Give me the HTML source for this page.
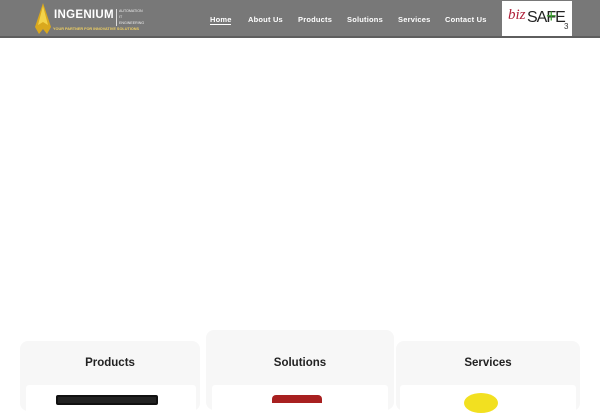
<!DOCTYPE html>
<html><head><style>
*{margin:0;padding:0;box-sizing:border-box}
body{width:600px;height:400px;overflow:hidden;background:#fff;font-family:"Liberation Sans",sans-serif;position:relative}
.hdr{position:absolute;left:0;top:0;width:600px;height:38px;background:#787878;border-bottom:2px solid #5e5e5e}
.nav{position:absolute;top:15px;color:#fff;font-size:7.5px;font-weight:bold;letter-spacing:.2px}
.card{position:absolute;background:#f7f7f7;border-radius:8px}
.card h3{position:absolute;width:100%;text-align:center;font-size:11.5px;color:#222;font-weight:bold}
.in{position:absolute;background:#fff;border-radius:3px}
</style></head><body>
<div class="hdr">
 <svg style="position:absolute;left:33px;top:3px" width="20" height="31" viewBox="0 0 20 31">
  <polygon points="10,0 18,24 14,31 10,26 6,31 2,24" fill="#d9a81e"/>
  <polygon points="10,3 15,22 10,19 5,22" fill="#f3d34a"/>
 </svg>
 <div style="position:absolute;left:54px;top:9px;color:#fff;font-size:11.5px;font-weight:bold;letter-spacing:.3px">INGENIUM</div>
 <div style="position:absolute;left:116px;top:9px;width:1px;height:17px;background:#ddd"></div>
 <div style="position:absolute;left:119px;top:8px;color:#eee;font-size:3.6px;line-height:6px">AUTOMATION<br>IT<br>ENGINEERING</div>
 <div style="position:absolute;left:53px;top:27px;color:#f0d060;font-size:3.8px;font-weight:bold">YOUR PARTNER FOR INNOVATIVE SOLUTIONS</div>
 <div class="nav" style="left:210px">Home</div>
 <div style="position:absolute;left:210px;top:24px;width:21px;height:1px;background:#fff"></div>
 <div class="nav" style="left:248px">About Us</div>
 <div class="nav" style="left:298px">Products</div>
 <div class="nav" style="left:347px">Solutions</div>
 <div class="nav" style="left:398px">Services</div>
 <div class="nav" style="left:445px">Contact Us</div>
 <div style="position:absolute;left:502px;top:1px;width:70px;height:35px;background:#fff">
  <span style="position:absolute;left:6px;top:6px;color:#b0203a;font-family:'Liberation Serif',serif;font-style:italic;font-size:15px">biz</span>
  <span style="position:absolute;left:25px;top:8px;color:#222;font-size:16px;letter-spacing:-1px">SAFE</span>
  <span style="position:absolute;left:44px;top:5px;color:#3a9a30;font-size:18px">+</span>
  <span style="position:absolute;left:62px;top:21px;color:#333;font-size:8px">3</span>
 </div>
</div>
<div class="card" style="left:20px;top:341px;width:180px;height:70px"><h3 style="top:16px">Products</h3>
 <div class="in" style="left:6px;top:44px;width:170px;height:30px"><div style="position:absolute;left:30px;top:10px;width:102px;height:10px;border:2px solid #111;border-radius:2px;background:#222"></div></div></div>
<div class="card" style="left:206px;top:330px;width:188px;height:80px"><h3 style="top:27px">Solutions</h3>
 <div class="in" style="left:6px;top:55px;width:176px;height:30px"><div style="position:absolute;left:60px;top:10px;width:50px;height:8px;background:#a82020;border-radius:4px 4px 0 0"></div></div></div>
<div class="card" style="left:396px;top:341px;width:184px;height:70px"><h3 style="top:16px">Services</h3>
 <div class="in" style="left:4px;top:44px;width:176px;height:30px"><div style="position:absolute;left:64px;top:8px;width:34px;height:20px;border-radius:50%;background:#f2e020"></div></div></div>
</body></html>
